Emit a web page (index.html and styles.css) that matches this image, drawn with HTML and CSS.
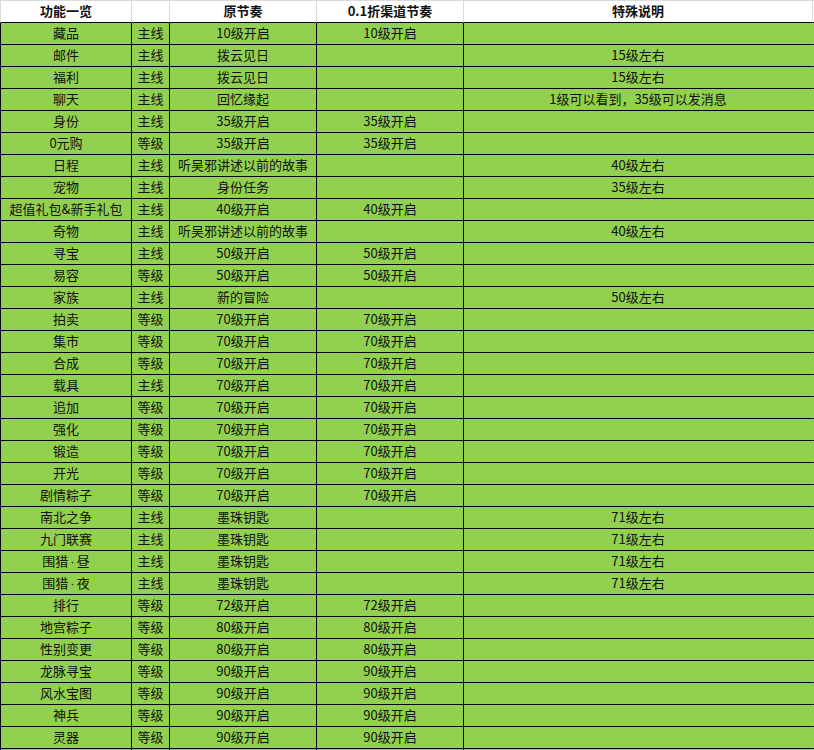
FILE: index.html
```html
<!DOCTYPE html>
<html lang="zh">
<head>
<meta charset="utf-8">
<title>功能一览</title>
<link rel="stylesheet" href="styles.css">
</head>
<body>
<div class="sheet">
<table class="grid">
<colgroup>
<col class="c1"><col class="c2"><col class="c3"><col class="c4"><col class="c5"><col class="c6">
</colgroup>
<thead>
<tr><th>功能一览</th><th></th><th>原节奏</th><th>0.1折渠道节奏</th><th>特殊说明</th><th class="extra"></th></tr>
</thead>
<tbody>
<tr><td>藏品</td><td>主线</td><td>10级开启</td><td>10级开启</td><td></td><td class="extra"></td></tr>
<tr><td>邮件</td><td>主线</td><td>拨云见日</td><td></td><td>15级左右</td><td class="extra"></td></tr>
<tr><td>福利</td><td>主线</td><td>拨云见日</td><td></td><td>15级左右</td><td class="extra"></td></tr>
<tr><td>聊天</td><td>主线</td><td>回忆缘起</td><td></td><td>1级可以看到，35级可以发消息</td><td class="extra"></td></tr>
<tr><td>身份</td><td>主线</td><td>35级开启</td><td>35级开启</td><td></td><td class="extra"></td></tr>
<tr><td>0元购</td><td>等级</td><td>35级开启</td><td>35级开启</td><td></td><td class="extra"></td></tr>
<tr><td>日程</td><td>主线</td><td>听吴邪讲述以前的故事</td><td></td><td>40级左右</td><td class="extra"></td></tr>
<tr><td>宠物</td><td>主线</td><td>身份任务</td><td></td><td>35级左右</td><td class="extra"></td></tr>
<tr><td>超值礼包&amp;新手礼包</td><td>主线</td><td>40级开启</td><td>40级开启</td><td></td><td class="extra"></td></tr>
<tr><td>奇物</td><td>主线</td><td>听吴邪讲述以前的故事</td><td></td><td>40级左右</td><td class="extra"></td></tr>
<tr><td>寻宝</td><td>主线</td><td>50级开启</td><td>50级开启</td><td></td><td class="extra"></td></tr>
<tr><td>易容</td><td>等级</td><td>50级开启</td><td>50级开启</td><td></td><td class="extra"></td></tr>
<tr><td>家族</td><td>主线</td><td>新的冒险</td><td></td><td>50级左右</td><td class="extra"></td></tr>
<tr><td>拍卖</td><td>等级</td><td>70级开启</td><td>70级开启</td><td></td><td class="extra"></td></tr>
<tr><td>集市</td><td>等级</td><td>70级开启</td><td>70级开启</td><td></td><td class="extra"></td></tr>
<tr><td>合成</td><td>等级</td><td>70级开启</td><td>70级开启</td><td></td><td class="extra"></td></tr>
<tr><td>载具</td><td>主线</td><td>70级开启</td><td>70级开启</td><td></td><td class="extra"></td></tr>
<tr><td>追加</td><td>等级</td><td>70级开启</td><td>70级开启</td><td></td><td class="extra"></td></tr>
<tr><td>强化</td><td>等级</td><td>70级开启</td><td>70级开启</td><td></td><td class="extra"></td></tr>
<tr><td>锻造</td><td>等级</td><td>70级开启</td><td>70级开启</td><td></td><td class="extra"></td></tr>
<tr><td>开光</td><td>等级</td><td>70级开启</td><td>70级开启</td><td></td><td class="extra"></td></tr>
<tr><td>剧情粽子</td><td>等级</td><td>70级开启</td><td>70级开启</td><td></td><td class="extra"></td></tr>
<tr><td>南北之争</td><td>主线</td><td>墨珠钥匙</td><td></td><td>71级左右</td><td class="extra"></td></tr>
<tr><td>九门联赛</td><td>主线</td><td>墨珠钥匙</td><td></td><td>71级左右</td><td class="extra"></td></tr>
<tr><td>围猎<span class="dot">·</span>昼</td><td>主线</td><td>墨珠钥匙</td><td></td><td>71级左右</td><td class="extra"></td></tr>
<tr><td>围猎<span class="dot">·</span>夜</td><td>主线</td><td>墨珠钥匙</td><td></td><td>71级左右</td><td class="extra"></td></tr>
<tr><td>排行</td><td>等级</td><td>72级开启</td><td>72级开启</td><td></td><td class="extra"></td></tr>
<tr><td>地宫粽子</td><td>等级</td><td>80级开启</td><td>80级开启</td><td></td><td class="extra"></td></tr>
<tr><td>性别变更</td><td>等级</td><td>80级开启</td><td>80级开启</td><td></td><td class="extra"></td></tr>
<tr><td>龙脉寻宝</td><td>等级</td><td>90级开启</td><td>90级开启</td><td></td><td class="extra"></td></tr>
<tr><td>风水宝图</td><td>等级</td><td>90级开启</td><td>90级开启</td><td></td><td class="extra"></td></tr>
<tr><td>神兵</td><td>等级</td><td>90级开启</td><td>90级开启</td><td></td><td class="extra"></td></tr>
<tr><td>灵器</td><td>等级</td><td>90级开启</td><td>90级开启</td><td></td><td class="extra"></td></tr>
<tr><td></td><td></td><td></td><td></td><td></td><td class="extra"></td></tr>
</tbody>
</table>
</div>
</body>
</html>
```

FILE: styles.css
```css
html, body {
  margin: 0;
  padding: 0;
  background: #ffffff;
}
.sheet {
  width: 814px;
  height: 750px;
  overflow: hidden;
}
.grid {
  border-collapse: separate;
  border-spacing: 0;
  table-layout: fixed;
  width: 860px;
  font-family: "Noto Sans CJK SC", "Microsoft YaHei", sans-serif;
  font-size: 13px;
  color: #111111;
}
.c1 { width: 132px; }
.c2 { width: 38px; }
.c3 { width: 147px; }
.c4 { width: 147px; }
.c5 { width: 349px; }
.c6 { width: 47px; }
.grid th,
.grid td {
  box-sizing: border-box;
  height: 22px;
  padding: 0 0 2px 0;
  text-align: center;
  vertical-align: middle;
  line-height: 19px;
  white-space: nowrap;
  overflow: hidden;
}
.grid th {
  background: #ffffff;
  font-weight: 700;
  border-top: 1px solid #dadada;
  border-right: 1px solid #dadada;
  border-bottom: 1px solid #000000;
  height: 23px;
}
.grid th:first-child {
  border-left: 1px solid #dadada;
}
.grid td {
  background: #92d050;
  border-right: 1px solid #000000;
  border-bottom: 1px solid #000000;
}
.grid td:first-child {
  border-left: 1px solid #000000;
}
.grid td:nth-child(5) {
  border-right-color: #92d050;
}
.grid .extra {
  border-right: none;
}
.dot {
  font-family: "Liberation Sans", sans-serif;
  line-height: 0;
  padding: 0 2px;
}
```
